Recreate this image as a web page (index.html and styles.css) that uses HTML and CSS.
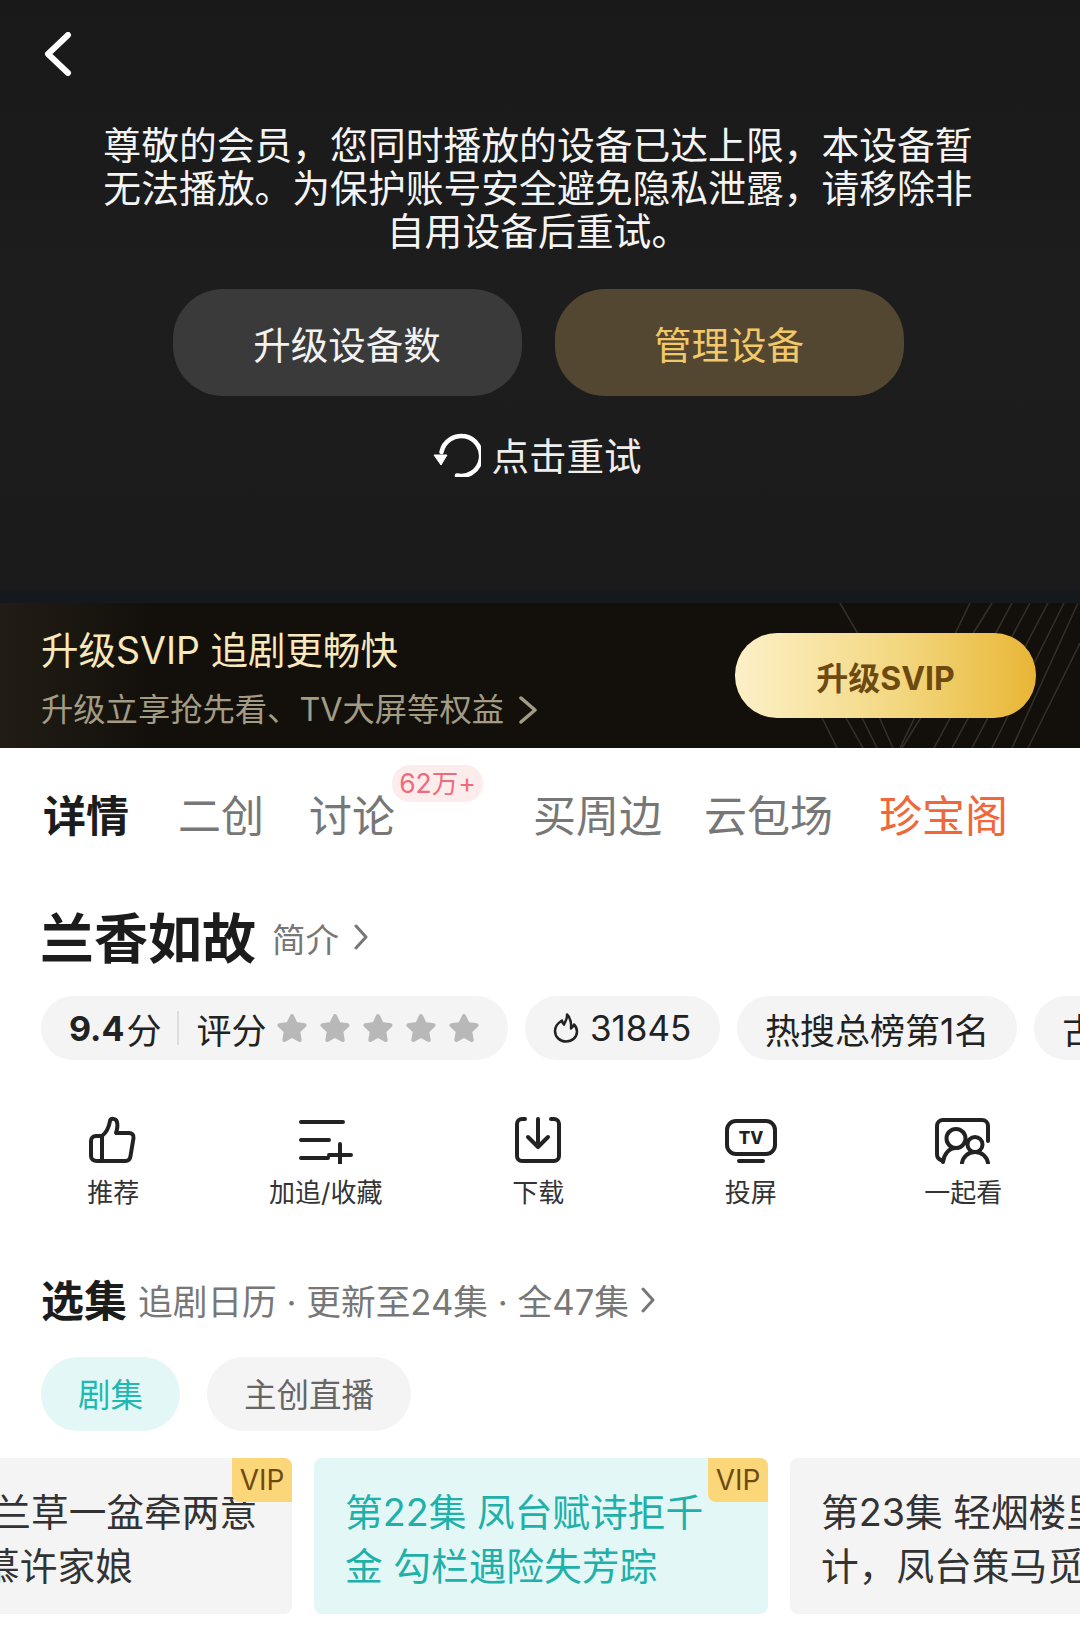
FILE: index.html
```html
<!DOCTYPE html>
<html lang="zh-CN">
<head>
  <meta charset="UTF-8">
  <meta name="viewport" content="width=device-width, initial-scale=1.0">
  <title>兰香如故</title>
  <link rel="stylesheet" href="styles.css">
</head>
<body>
  <svg class="defs" width="0" height="0">
    <symbol id="star" viewBox="0 0 32 32">
      <path d="M16 4l3.800 8 8.700 1.200-6.300 6 1.500 8.800L16 23.800 8.300 28l1.500-8.800-6.300-6L12.200 12z" fill="#b8b8b8" stroke="#b8b8b8" stroke-width="4" stroke-linejoin="round"/>
    </symbol>
  </svg>

  <div class="page">
    <section class="player">
      <svg class="back" width="28" height="44" viewBox="0 0 28 44">
        <path d="M24 3L4 22l20 19" fill="none" stroke="#fff" stroke-width="6" stroke-linecap="round" stroke-linejoin="round"/>
      </svg>
      <p class="message">尊敬的会员，您同时播放的设备已达上限，本设备暂无法播放。为保护账号安全避免隐私泄露，请移除非自用设备后重试。</p>
      <div class="button-group">
        <button class="btn btn-gray">升级设备数</button>
        <button class="btn btn-gold">管理设备</button>
      </div>
      <div class="retry">
        <svg width="48" height="44" viewBox="0 0 48 44">
          <path d="M24 42.500A20 20 0 1 0 8.500 19" fill="none" stroke="#fff" stroke-width="4.500" stroke-linecap="round"/>
          <path d="M1 22h13L8 32z" fill="#fff" stroke="#fff" stroke-linejoin="round"/>
        </svg>
        <span class="retry-text">点击重试</span>
      </div>
    </section>

    <section class="banner">
      <svg class="banner-lines" width="320" height="145" viewBox="0 0 320 145">
        <g stroke="#8d8570" stroke-width="1.500" fill="none" opacity="0.28">
          <path d="M80 0l35 60M35 60l42 85M55 60l48 85M75 60l42 85M95 60l38 85"/>
          <path d="M210 0l-70 145M232 0l-90 145M252 0l-78 145M270 0l-78 145M288 0l-76 145M304 0l-72 145M318 0l-66 145M320 40l-52 105"/>
        </g>
      </svg>
      <div class="banner-text">
        <div class="banner-title">升级SVIP 追剧更畅快</div>
        <div class="banner-sub">
          升级立享抢先看、TV大屏等权益
          <svg width="20" height="28" viewBox="0 0 20 28"><path d="M3 2l14 12L3 26" fill="none" stroke="#a39c85" stroke-width="3.500" stroke-linecap="round" stroke-linejoin="round"/></svg>
        </div>
      </div>
      <button class="btn-svip">升级SVIP</button>
    </section>

    <nav class="tabs">
      <span class="tab active">详情</span>
      <span class="tab">二创</span>
      <span class="tab tab-talk">讨论<em class="badge">62万+</em></span>
      <span class="tab tab-shop">买周边</span>
      <span class="tab">云包场</span>
      <span class="tab tab-hot">珍宝阁</span>
    </nav>

    <div class="title-row">
      <h1>兰香如故</h1>
      <span class="intro">简介</span>
      <svg class="arrow" width="16" height="26" viewBox="0 0 16 26"><path d="M3 2l10 11L3 24" fill="none" stroke="#777" stroke-width="3" stroke-linecap="round" stroke-linejoin="round"/></svg>
    </div>

    <div class="chips">
      <div class="chip chip-score">
        <b>9.4</b><span class="fen">分</span>
        <i class="divider"></i>
        <span>评分</span>
        <div class="stars">
          <svg width="32" height="32"><use href="#star"/></svg>
          <svg width="32" height="32"><use href="#star"/></svg>
          <svg width="32" height="32"><use href="#star"/></svg>
          <svg width="32" height="32"><use href="#star"/></svg>
          <svg width="32" height="32"><use href="#star"/></svg>
        </div>
      </div>
      <div class="chip chip-heat">
        <svg width="26" height="30" viewBox="0 0 26 30"><path d="M14 1.500c.5 5-2 7-3 10-1-1-2-2-2-4C5 10 2 13.500 2 18c0 6 5 10.500 11 10.500S24 24.500 24 18.500c0-3-1-5-3-7-.5 2-1.500 3-3 4 .5-6-1-11-4-14z" fill="none" stroke="#222" stroke-width="2.500" stroke-linejoin="round"/></svg>
        <span>31845</span>
      </div>
      <div class="chip">热搜总榜第1名</div>
      <div class="chip">古装</div>
    </div>

    <div class="actions">
      <div class="action">
        <svg width="48" height="48" viewBox="0 0 48 48"><path d="M13 45V20c5-4 7-9 8-15 .6-3 6-3 7 1 1 4 0 8-1 11h13c3 0 5 2 4.500 5l-3 18c-.4 3-2 5-5 5H8c-3.500 0-6-2-6-5V25c0-3 2-5 5-5h6" fill="none" stroke="#222" stroke-width="4" stroke-linejoin="round"/></svg>
        <span>推荐</span>
      </div>
      <div class="action">
        <svg width="54" height="48" viewBox="0 0 54 48"><path d="M2 6h42M2 24h28M2 42h27M41 28v22M30 39h22" fill="none" stroke="#222" stroke-width="4" stroke-linecap="round"/></svg>
        <span>加追/收藏</span>
      </div>
      <div class="action">
        <svg width="48" height="48" viewBox="0 0 48 48"><path d="M11 3H8a5 5 0 0 0-5 5v32a5 5 0 0 0 5 5h32a5 5 0 0 0 5-5V8a5 5 0 0 0-5-5h-3M24 3v27M14 21l10 10 10-10" fill="none" stroke="#222" stroke-width="4" stroke-linecap="round" stroke-linejoin="round"/></svg>
        <span>下载</span>
      </div>
      <div class="action">
        <svg width="54" height="48" viewBox="0 0 54 48">
          <rect x="3" y="5" width="48" height="33" rx="9" fill="none" stroke="#222" stroke-width="4"/>
          <path d="M15 45h24" stroke="#222" stroke-width="4" stroke-linecap="round"/>
          <text x="27" y="28" class="tv-text">TV</text>
        </svg>
        <span>投屏</span>
      </div>
      <div class="action">
        <svg width="56" height="48" viewBox="0 0 56 48"><path d="M6 44c-3-1-4-3-4-6V10a6 6 0 0 1 6-6h39a6 6 0 0 1 6 6v15M8 46c1-8 6-14 13-14M21 13a9.500 9.500 0 1 0 0 19 9.500 9.500 0 0 0 0-19zM40 21a7.500 7.500 0 1 0 0 15 7.500 7.500 0 0 0 0-15zM27 47c1-6 6-11 13-11s12 5 13 11" fill="none" stroke="#222" stroke-width="4" stroke-linecap="round" stroke-linejoin="round"/></svg>
        <span>一起看</span>
      </div>
    </div>

    <div class="section-head">
      <h2>选集</h2>
      <span class="section-sub">追剧日历 · 更新至24集 · 全47集</span>
      <svg class="arrow" width="16" height="26" viewBox="0 0 16 26"><path d="M3 2l10 11L3 24" fill="none" stroke="#777" stroke-width="3" stroke-linecap="round" stroke-linejoin="round"/></svg>
    </div>

    <div class="ep-tabs">
      <span class="ep-tab current">剧集</span>
      <span class="ep-tab">主创直播</span>
    </div>

    <div class="episodes">
      <div class="episode">
        <span class="vip">VIP</span>
        <p>第21集 兰草一盆牵两意<br>谢郎倾慕许家娘</p>
      </div>
      <div class="episode playing">
        <span class="vip">VIP</span>
        <p>第22集 凤台赋诗拒千<br>金 勾栏遇险失芳踪</p>
      </div>
      <div class="episode">
        <p>第23集 轻烟楼里施巧<br>计，凤台策马觅佳人</p>
      </div>
    </div>
  </div>
</body>
</html>
```

FILE: styles.css
```css
* {
  box-sizing: border-box;
}
body {
  margin: 0;
  padding: 0;
  background-color: #fff;
  color: #222;
  font-family: Inter, "Noto Sans CJK SC", "Noto Sans", sans-serif;
}
.defs {
  display: block;
  height: 0;
}
.page {
  width: 1080px;
  height: 1642px;
  overflow: hidden;
}
button {
  border: none;
  font-family: inherit;
}
.arrow {
  margin-top: 4px;
}

/* player */
.player {
  height: 603px;
  padding-top: 32px;
  color: #fff;
  background: linear-gradient(180deg, #191919 0, #1d1d1d 50%, #1b1b1b 97.800%, #15181c 97.800%);
}
.back {
  display: block;
  margin-left: 44px;
}
.message {
  width: 880px;
  margin: 48px 0 0 98px;
  font-size: 37.800px;
  line-height: 43px;
  text-align: center;
  color: #f4f4f4;
}
.button-group {
  display: flex;
  justify-content: center;
  gap: 33px;
  margin-top: 36px;
  padding-right: 4px;
}
.btn {
  width: 349px;
  height: 107px;
  border-radius: 50px;
  font-size: 37.5px;
}
.btn-gray {
  background-color: #3a3a3a;
  color: #f2f2f2;
}
.btn-gold {
  background-color: #544732;
  color: #f2c868;
}
.retry {
  display: flex;
  align-items: center;
  justify-content: center;
  gap: 11px;
  margin-top: 35px;
  padding-right: 6px;
  font-size: 37.5px;
  line-height: 44px;
  color: #eee;
}
.retry-text {
  padding-top: 4px;
}

/* svip banner */
.banner {
  position: relative;
  display: flex;
  align-items: center;
  justify-content: space-between;
  height: 145px;
  padding: 0 44px 0 41px;
  background: linear-gradient(90deg, #211d14, #13100c 14%);
}
.banner-lines {
  position: absolute;
  right: 0;
  top: 0;
}
.banner-text {
  margin-top: 10px;
}
.banner-title {
  font-size: 37.5px;
  line-height: 50px;
  color: #f8e8bb;
}
.banner-sub {
  display: flex;
  align-items: center;
  gap: 14px;
  margin-top: 9px;
  font-size: 32.300px;
  line-height: 50px;
  color: #a39c85;
}
.btn-svip {
  position: relative;
  width: 301px;
  height: 85px;
  border-radius: 42px;
  background: linear-gradient(90deg, #fcf0c8 0, #f3d77f 55%, #e8b635 100%);
  color: #6e4a10;
  font-size: 32px;
  font-weight: 700;
}

/* tabs */
.tabs {
  display: flex;
  gap: 48px;
  padding: 39px 0 0 43px;
  font-size: 43px;
  line-height: 58px;
  color: #777;
}
.tab {
  position: relative;
}
.tab.active {
  color: #1c1c1c;
  font-weight: 700;
  margin-right: 1px;
}
.tab-talk {
  margin: 0 90px 0 -3px;
}
.tab-shop {
  margin-right: -6px;
}
.tab-hot {
  margin-left: -2px;
  color: #f0673a;
}
.badge {
  position: absolute;
  left: 83px;
  top: -22px;
  width: 91px;
  height: 37px;
  border-radius: 18px;
  background-color: #fdecec;
  color: #ee6b7c;
  font-size: 26.500px;
  font-style: normal;
  line-height: 37px;
  text-align: center;
}

/* title */
.title-row {
  display: flex;
  align-items: center;
  height: 60px;
  margin: 60px 0 0 40px;
}
h1 {
  margin: 0;
  font-size: 54px;
  font-weight: 700;
  color: #1c1c1c;
}
.intro {
  margin: 4px 14px 0 16px;
  font-size: 33.500px;
  color: #777;
}

/* chips */
.chips {
  display: flex;
  gap: 17px;
  margin: 31px 0 0 41px;
}
.chip {
  display: flex;
  align-items: center;
  flex: none;
  height: 64px;
  padding: 0 28px;
  border-radius: 32px;
  background-color: #f4f4f4;
  font-size: 35px;
  white-space: nowrap;
}
.chip b {
  font-size: 34px;
}
.chip-score {
  width: 467px;
}
.fen {
  margin-left: 2px;
}
.divider {
  flex: none;
  width: 2px;
  height: 34px;
  margin: 0 17px 0 16px;
  background-color: #ddd;
}
.stars {
  display: flex;
  gap: 11px;
  margin-left: 10px;
}
.chip-heat {
  width: 195px;
  gap: 11px;
}

/* action row */
.actions {
  display: grid;
  grid-template-columns: repeat(5, 212.5px);
  margin: 56px 0 0 7px;
}
.action {
  display: flex;
  flex-direction: column;
  align-items: center;
  gap: 11px;
  font-size: 26px;
  line-height: 36px;
  color: #333;
}
.action svg {
  display: block;
}
.tv-text {
  font-size: 17px;
  font-weight: 800;
  text-anchor: middle;
  fill: #222;
}

/* episodes */
.section-head {
  display: flex;
  align-items: center;
  height: 58px;
  margin: 58px 0 0 41px;
}
h2 {
  margin: 0;
  font-size: 43px;
  font-weight: 700;
  color: #1c1c1c;
}
.section-sub {
  margin: 4px 11px 0 11px;
  font-size: 34.700px;
  color: #777;
}
.ep-tabs {
  display: flex;
  gap: 27px;
  margin: 30px 0 0 41px;
}
.ep-tab {
  height: 74px;
  padding: 0 37px;
  border-radius: 37px;
  background-color: #f4f4f4;
  font-size: 32.500px;
  line-height: 78px;
  color: #666;
}
.ep-tab.current {
  padding: 0 37px;
  background-color: #e3f7f6;
  color: #1fb9b3;
}
.episodes {
  display: flex;
  gap: 22px;
  margin: 27px 0 0 -162px;
}
.episode {
  position: relative;
  flex: none;
  width: 454px;
  height: 156px;
  padding: 28px 0 0 31px;
  border-radius: 8px;
  background-color: #f4f4f4;
  font-size: 37.700px;
  line-height: 53.500px;
  color: #333;
}
.episode p {
  margin: 0;
  white-space: nowrap;
}
.episode.playing {
  background-color: #e3f7f6;
  color: #1fb0aa;
}
.vip {
  position: absolute;
  right: 0;
  top: 0;
  width: 60px;
  height: 44px;
  border-radius: 0 8px 0 8px;
  background-color: #fbd77a;
  color: #6e4a10;
  font-size: 28px;
  line-height: 44px;
  text-align: center;
}
```
